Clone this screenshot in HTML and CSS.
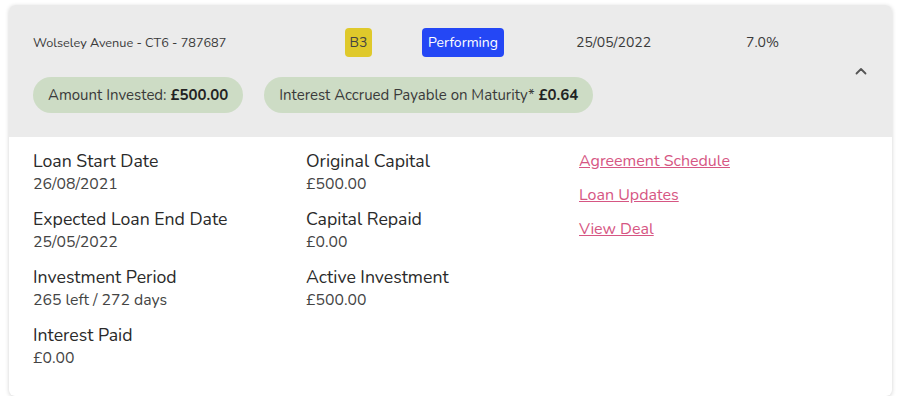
FILE: index.html
```html
<!DOCTYPE html>
<html>
<head>
<meta charset="utf-8">
<link rel="stylesheet" href="styles.css">
</head>
<body>
<div class="card">
  <div class="card-head">
    <div class="head-main">
      <div class="head-row">
        <div class="col-name">Wolseley Avenue - CT6 - 787687</div>
        <div class="col-grade"><span class="grade">B3</span></div>
        <div class="col-status"><span class="status">Performing</span></div>
        <div class="col-date">25/05/2022</div>
        <div class="col-rate">7.0%</div>
      </div>
      <div class="pills">
        <span class="pill">Amount Invested: <b>£500.00</b></span>
        <span class="pill">Interest Accrued Payable on Maturity* <b>£0.64</b></span>
      </div>
    </div>
    <div class="chevron">
      <svg width="12" height="8" viewBox="0 0 12 8"><path d="M1.5 6.5 L6 2 L10.5 6.5" fill="none" stroke="#555" stroke-width="1.8" stroke-linecap="round" stroke-linejoin="round"/></svg>
    </div>
  </div>
  <div class="card-body">
    <div class="col">
      <div class="item"><div class="label">Loan Start Date</div><div class="value">26/08/2021</div></div>
      <div class="item"><div class="label">Expected Loan End Date</div><div class="value">25/05/2022</div></div>
      <div class="item"><div class="label">Investment Period</div><div class="value">265 left / 272 days</div></div>
      <div class="item"><div class="label">Interest Paid</div><div class="value">£0.00</div></div>
    </div>
    <div class="col">
      <div class="item"><div class="label">Original Capital</div><div class="value">£500.00</div></div>
      <div class="item"><div class="label">Capital Repaid</div><div class="value">£0.00</div></div>
      <div class="item"><div class="label">Active Investment</div><div class="value">£500.00</div></div>
    </div>
    <div class="col links">
      <a href="#">Agreement Schedule</a>
      <a href="#">Loan Updates</a>
      <a href="#">View Deal</a>
    </div>
  </div>
</div>
</body>
</html>
```

FILE: styles.css
```css
* { box-sizing: border-box; }
html, body { margin: 0; padding: 0; background: #fff; }
body {
  font-family: "Nunito", Lato, "Noto Sans", sans-serif;
  color: #333;
  padding: 5px 6px 0 9px;
}
.card {
  width: 883px;
  height: 391px;
  border-radius: 6px;
  background: #fff;
  box-shadow: 0 1px 4px rgba(0,0,0,0.18);
  overflow: hidden;
}
.card-head {
  background: #ebebeb;
  height: 132px;
  display: flex;
  padding: 23px 0 0 24px;
}
.head-main { flex: 1; }
.head-row {
  display: grid;
  grid-template-columns: 312px 77px 154px 170px 1fr;
  align-items: center;
  height: 29px;
}
.col-name { font-size: 12.7px; color: #3a3a3a; }
.col-date, .col-rate { font-size: 14px; color: #3a3a3a; }
.grade {
  display: inline-block;
  background: #dfc92b;
  color: #444;
  font-size: 14px;
  width: 27px;
  height: 29px;
  line-height: 29px;
  text-align: center;
  border-radius: 4px;
}
.status {
  display: inline-block;
  background: #2447f5;
  color: #fff;
  font-size: 14px;
  height: 29px;
  line-height: 29px;
  padding: 0 6px;
  border-radius: 4px;
}
.pills {
  display: flex;
  gap: 21px;
  margin-top: 20px;
}
.pill {
  background: #cddcc5;
  border-radius: 18px;
  height: 36px;
  line-height: 36px;
  padding: 0 15px;
  font-size: 15px;
  color: #3a3a3a;
}
.pill b { color: #222; font-weight: 700; }
.chevron {
  width: 62px;
  display: flex;
  justify-content: center;
  padding-top: 39px;
}
.chevron svg { display: block; }
.card-body {
  display: grid;
  grid-template-columns: 273px 273px 1fr;
  padding: 13px 0 0 24px;
}
.item { margin-bottom: 11px; }
.label { font-size: 17.7px; line-height: 22px; color: #2a2a2a; }
.value { font-size: 15.8px; line-height: 25px; color: #444; }
.links { display: flex; flex-direction: column; align-items: flex-start; gap: 12px; }
.links a {
  font-size: 16px;
  line-height: 22px;
  color: #d65683;
  text-decoration: underline;
}
```
